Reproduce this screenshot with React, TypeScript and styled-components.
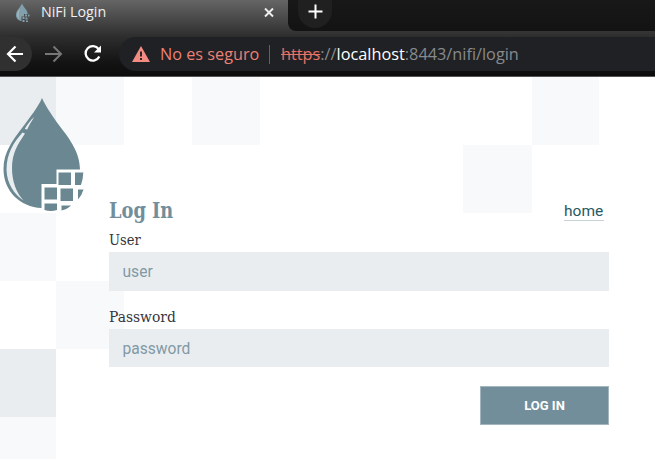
import React from 'react';
import styled, { createGlobalStyle } from 'styled-components';

const GlobalStyle = createGlobalStyle`
  * { box-sizing: border-box; }
  html, body { margin: 0; padding: 0; overflow: hidden; background: #fff; }
`;

const Window = styled.div`
  width: 655px;
  height: 459px;
  display: flex;
  flex-direction: column;
  overflow: hidden;
  background: #fff;
`;

/* Text whose natural advance is brought to a given width ratio. */
const Fit = styled.span<{ $x?: number }>`
  display: inline-block;
  white-space: pre;
  transform: scaleX(${p => p.$x ?? 1});
  transform-origin: 0 50%;
`;

const Chrome = styled.header`
  flex: none;
  height: 77px;
  display: flex;
  flex-direction: column;
  background: linear-gradient(#656565 0, #4a4a4a 18px, #2d2d2d 37px, #141414 62px, #0c0c0c 76px);
  border-bottom: 1px solid #555457;
  font-family: "Open Sans", "Noto Sans", sans-serif;
`;

const TabStrip = styled.div`
  height: 31px;
  display: flex;
  flex: none;
`;

const Tab = styled.div`
  width: 288px;
  height: 25px;
  padding-left: 15px;
  display: flex;
  align-items: center;
  color: #f0f0f0;
  font-size: 14px;
  line-height: 20px;
`;

const TabTitle = styled.div`
  width: 222px;
  margin-left: 10px;
  height: 21px;
`;

const Strip = styled.div`
  flex: 1;
  height: 31px;
  padding-left: 10px;
  background: linear-gradient(#181818, #131313);
  border-bottom-left-radius: 8px;
`;

const NewTab = styled.div`
  width: 34px;
  height: 28px;
  padding: 3px 0 0 8.5px;
  border-radius: 0 0 17px 17px;
  background: #202020;
`;

const Toolbar = styled.div`
  display: flex;
  align-items: center;
  height: 34px;
  margin-top: 6px;
  flex: none;
`;

const NavButton = styled.div<{ $w: number; $active?: boolean }>`
  width: ${p => p.$w}px;
  height: 34px;
  flex: none;
  display: flex;
  align-items: center;
  border-radius: 0 17px 17px 0;
  background: ${p => (p.$active ? '#303030' : 'transparent')};
`;

const Address = styled.div`
  flex: 1;
  height: 34px;
  display: flex;
  align-items: center;
  padding-left: 13px;
  border-radius: 17px 0 0 17px;
  background: #202124;
  color: #878a8e;
  font-size: 16px;
  line-height: 24px;
  white-space: nowrap;
`;

const Warning = styled.div`
  width: 109px;
  margin-left: 10px;
  color: #ea8076;
`;

const Divider = styled.div`
  width: 1px;
  height: 19px;
  margin-right: 11px;
  background: #606165;
`;

const Scheme = styled.s`
  color: #e57368;
`;

const Host = styled.b`
  font-weight: 400;
  color: #fff;
`;

const Page = styled.main`
  flex: 1;
  display: grid;
  grid-template: 382px / 655px;
  overflow: hidden;
`;

const Tiles = styled.div`
  grid-area: 1 / 1;
  display: grid;
  grid-template-columns: 56px repeat(5, 68px) 67px 69px 67px;
  grid-template-rows: repeat(6, 68px);
  overflow: hidden;
`;

const Tile = styled.div<{ $row: number; $col: number; $dark?: boolean }>`
  grid-area: ${p => p.$row} / ${p => p.$col};
  background: ${p => (p.$dark ? '#e9edf0' : '#f8f9fb')};
`;

const Content = styled.div`
  grid-area: 1 / 1;
  display: grid;
  grid-template-columns: 109px 500px;
  z-index: 1;
  font-family: Roboto, sans-serif;
`;

const Form = styled.form`
  display: flex;
  flex-direction: column;
  padding-top: 119px;
`;

const Heading = styled.div`
  display: flex;
  justify-content: space-between;
  height: 35px;
  padding-right: 5px;
`;

const Title = styled.h1`
  margin: 0;
  font: 700 21.5px/29px "Roboto Slab", "DejaVu Serif Condensed", "DejaVu Serif", serif;
  color: #728e9b;
`;

const HomeLink = styled.a`
  height: 19px;
  margin-top: 6px;
  width: 40px;
  font-size: 15.5px;
  line-height: 19px;
  color: #275963;
  border-bottom: 1px solid #c5d3d8;
`;

const Label = styled.label`
  height: 21px;
  font: 400 14px/19px "Roboto Slab", "DejaVu Serif Condensed", "DejaVu Serif", serif;
  color: #35353b;
`;

const Input = styled.input`
  width: 500px;
  height: 39px;
  margin: 0 0 17px;
  padding: 1px 13.5px 0;
  border: 0;
  border-radius: 0;
  outline: 0;
  background: #e9edf0;
  font: 400 15.6px Roboto, sans-serif;
  color: #3a4a52;
  &::placeholder { color: #8299a5; opacity: 1; }
`;

const PasswordInput = styled(Input)`
  height: 38px;
`;

const Submit = styled.button`
  align-self: flex-end;
  width: 129px;
  height: 39px;
  margin-top: 2px;
  padding: 0;
  border: 1px solid #a3b5bd;
  background: #728e9b;
  color: #fff;
  font: 700 13px Roboto, sans-serif;
`;

const tiles = [
  { row: 1, col: 1, dark: true },
  { row: 1, col: 2 },
  { row: 1, col: 4 },
  { row: 1, col: 9 },
  { row: 2, col: 8 },
  { row: 3, col: 1 },
  { row: 4, col: 2 },
  { row: 5, col: 1, dark: true },
  { row: 6, col: 1 },
];

const NifiDrop = () => (
  <svg width="90" height="145" viewBox="0 1 90 145">
    <path
      fill="#6b8791"
      d="M42 22C45 29 51 38 57 46.500C68 61 80 75 80 93.500H56.500V108H41.500V132C20 131 3.500 115 3.500 93C3.500 76 13 64 22 52C31 40 38 31 42 22Z"
    />
    <path fill="#e8edef" d="M34.200 41C30.500 44 27 49 24.800 53L27.200 53.500C29 49 32 45 34.200 41ZM22.500 56.500C14 66 6.500 77 6.500 94C7 108 14 118 23.500 124.500C16 116 12 105 12 92C12 77 18 68 25 57.500Z" />
    <path
      fill="#6b8791"
      d="M58.500 96.500H71V109H58.500ZM75 96.500H83.300Q83 104 81 109H75ZM44.500 111.500H57V123.500H44.500ZM60.500 112.500H73V125H60.500ZM78 113.500H83.500Q82 119 78 123.500ZM44.500 127.500H57V134Q51 136 44.500 134ZM61.500 129.500H71Q67 133.500 61.500 134.500Z"
    />
  </svg>
);

const Favicon = () => (
  <svg width="16" height="20" viewBox="0 0 16 20">
    <path fill="#81a0ac" d="M7 0.500C9 5 12.500 7 12.800 11H9V13.500H6.500V18C3 17.500 1 15 1 12C1 7.500 5 5 7 .5Z" />
    <path fill="#aebfc6" d="M5 6C2 9 1.500 13 4 16C3 12 3.500 9 5 6Z" />
    <path fill="#81a0ac" d="M10 11.500H12V13.500H10ZM13 11.500H14.500V13.500H13ZM7.500 14H9.500V16H7.500ZM10.500 14.500H12.500V16.500H10.500ZM7.500 17H9.500V19H7.500ZM11 17.500H13V19H11Z" />
  </svg>
);

export default function App() {
  return (
    <>
      <GlobalStyle />
      <Window>
        <Chrome>
          <TabStrip>
            <Tab>
              <Favicon />
              <TabTitle><Fit $x={1.02}>NiFi Login</Fit></TabTitle>
              <svg width="12" height="12" viewBox="0 0 12 12" fill="none" stroke="#eee" strokeWidth="1.9">
                <path d="M2 1.500L10 9.500M10 1.500L2 9.500" />
              </svg>
            </Tab>
            <Strip>
              <NewTab>
                <svg width="17" height="17" viewBox="0 0 17 17" fill="none" stroke="#fff" strokeWidth="2">
                  <path d="M8.500 1.500V15.500M1.500 8.500H15.500" />
                </svg>
              </NewTab>
            </Strip>
          </TabStrip>
          <Toolbar>
            <NavButton $w={32} $active>
              <svg width="28" height="22" viewBox="0 0 28 22" fill="none" stroke="#fff" strokeWidth="2.200">
                <path d="M23 11H8M15.500 3.500L8 11L15.500 18.500" />
              </svg>
            </NavButton>
            <NavButton $w={51}>
              <svg width="34" height="22" viewBox="0 0 34 22" fill="none" stroke="#777" strokeWidth="2">
                <path d="M13 11H29M21.500 3.500L29 11L21.500 18.500" />
              </svg>
            </NavButton>
            <NavButton $w={36}>
              <svg width="20" height="20" viewBox="0 0 20 20" fill="none" stroke="#fff" strokeWidth="2.300">
                <path d="M15.700 5.200A7.200 7.200 0 1 0 16.300 12.500" />
                <path fill="#fff" stroke="none" d="M18 1.500V8.500H11Z" />
              </svg>
            </NavButton>
            <Address>
              <svg width="18" height="16" viewBox="0 0 18 16">
                <path fill="#f28b82" d="M9 0L18 16H0Z" />
                <path stroke="#302427" strokeWidth="2" d="M9 5.500V10.500M9 12V14" />
              </svg>
              <Warning><Fit $x={1.015}>No es seguro</Fit></Warning>
              <Divider />
              <Fit $x={1.018}>
                <Scheme>https</Scheme>://<Host>localhost</Host>:8443/nifi/login
              </Fit>
            </Address>
          </Toolbar>
        </Chrome>
        <Page>
          <Tiles>
            {tiles.map(t => (
              <Tile key={`${t.row}-${t.col}`} $row={t.row} $col={t.col} $dark={t.dark} />
            ))}
          </Tiles>
          <Content>
            <NifiDrop />
            <Form onSubmit={e => e.preventDefault()}>
              <Heading>
                <Title><Fit $x={0.92}>Log In</Fit></Title>
                <HomeLink>home</HomeLink>
              </Heading>
              <Label htmlFor="user"><Fit $x={1.04}>User</Fit></Label>
              <Input id="user" placeholder="user" />
              <Label htmlFor="password"><Fit $x={1.1}>Password</Fit></Label>
              <PasswordInput id="password" type="password" placeholder="password" />
              <Submit type="submit">LOG IN</Submit>
            </Form>
          </Content>
        </Page>
      </Window>
    </>
  );
}
